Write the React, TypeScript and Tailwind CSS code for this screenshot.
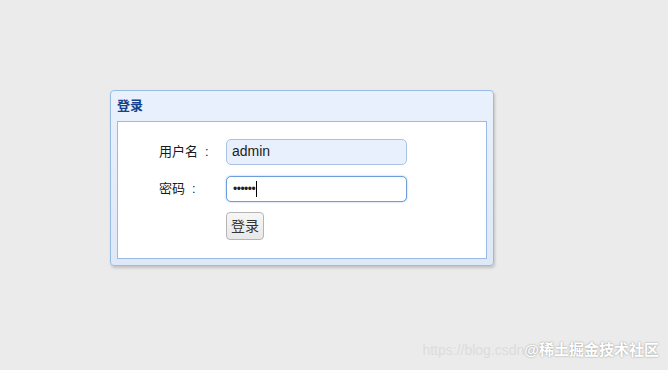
import React from "react";

const font = { fontFamily: '"Liberation Sans", "Noto Sans CJK SC", sans-serif' };

const LoginPanel = () => {
  return (
    <div className="w-[384px] h-[176px] ml-[110px] mt-[90px] rounded-[4px] border border-[#99bbe8] bg-gradient-to-b from-[#e9f1fd] to-[#dfe8f6] shadow-[1px_2px_3px_rgba(0,0,0,0.18)] flex flex-col">
      <div className="h-[30px] flex items-center pl-[6px] text-[13px] font-bold text-[#15428b]">
        登录
      </div>
      <div className="mx-[6px] mb-[6px] flex-1 border border-[#99bbe8] bg-white pt-[17px] pl-[41px]">
        <div className="flex items-center h-[25px]">
          <span className="w-[67px] text-[13px] text-[#1a1a1a]">
            用户名<span className="ml-[7px]">:</span>
          </span>
          <div className="w-[181px] h-[26px] rounded-[5px] border border-[#a9c1e2] bg-[#e8f0fe] flex items-center pl-[5px] text-[14px] text-[#222]">
            admin
          </div>
        </div>
        <div className="flex items-center h-[25px] mt-[12px]">
          <span className="w-[67px] text-[13px] text-[#1a1a1a]">
            密码<span className="ml-[7px]">:</span>
          </span>
          <div className="w-[181px] h-[26px] rounded-[5px] border border-[#6d9ddb] bg-white shadow-[0_0_2px_rgba(90,140,210,0.6)] flex items-center pl-[6px] text-[12px] text-[#222] tracking-[-0.5px]">
            ••••••<span className="ml-[1px] w-px h-[16px] bg-black" />
          </div>
        </div>
        <div className="ml-[67px] mt-[11px]">
          <button className="w-[38px] h-[28px] rounded-[4px] border border-[#b5b5b5] bg-gradient-to-b from-[#f7f7f7] to-[#e8e8e8] text-[14px] text-[#333]">
            登录
          </button>
        </div>
      </div>
    </div>
  );
};

export default function App() {
  return (
    <div className="w-[668px] h-[370px] bg-[#ebebeb] relative overflow-hidden" style={font}>
      <LoginPanel />
      <div className="absolute right-[9px] bottom-[9px] flex items-baseline">
        <span className="text-[14px] text-[#dcdcdc]">https://blog.csdn</span>
        <span className="text-[15px] font-bold text-white [text-shadow:0_0_2px_rgba(0,0,0,0.4)]">
          @稀土掘金技术社区
        </span>
      </div>
    </div>
  );
}
